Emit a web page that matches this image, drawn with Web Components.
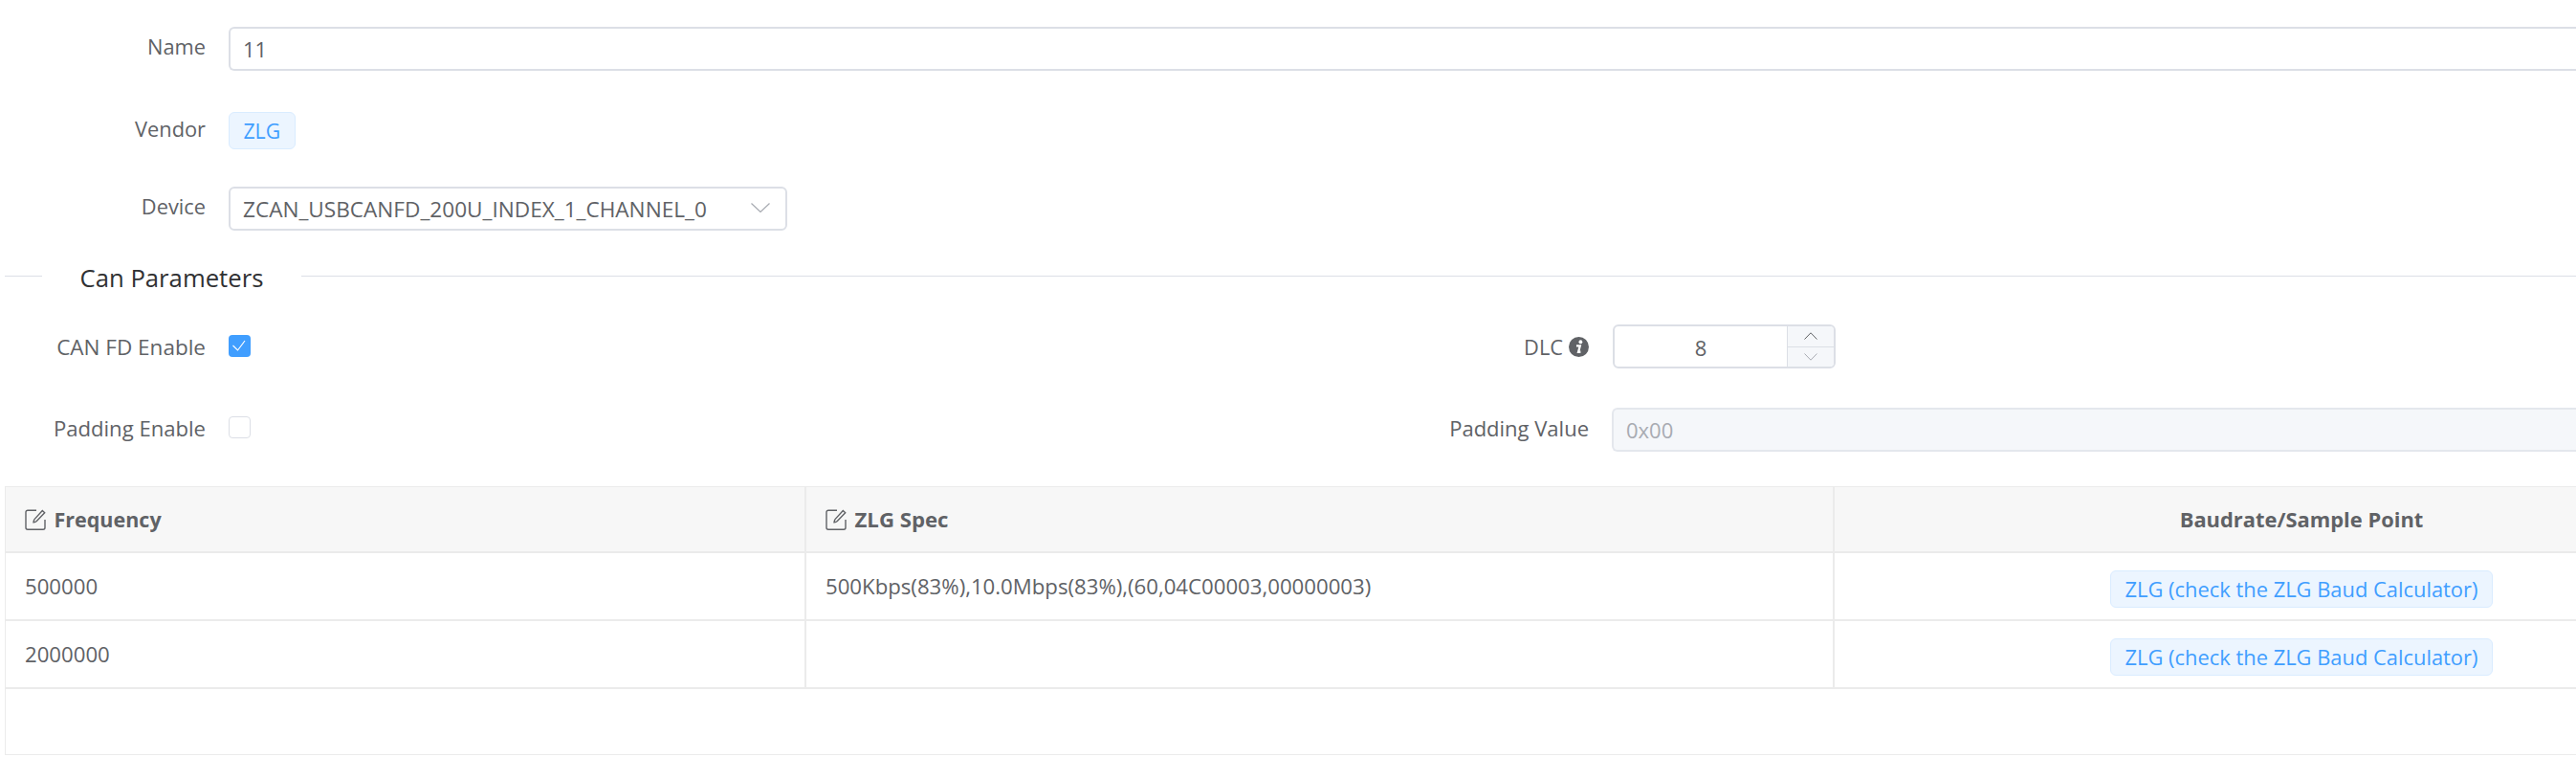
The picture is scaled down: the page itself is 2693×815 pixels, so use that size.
<!DOCTYPE html>
<html><head><meta charset="utf-8"><style>
html,body{margin:0;padding:0;background:#fff;overflow:hidden;height:815px}
body{font-family:"Open Sans","Noto Sans",sans-serif;font-size:21.8px;color:#606266}
</style></head><body>
<can-form>
  <form-row label="Name" style="--top:28px"><text-box value="11"></text-box></form-row>
  <form-row label="Vendor" style="--top:39.5px"><blue-tag style="font-size:21.2px">ZLG</blue-tag></form-row>
  <form-row label="Device" style="--top:35.5px"><select-box value="ZCAN_USBCANFD_200U_INDEX_1_CHANNEL_0"></select-box></form-row>
  <form-divider>Can Parameters</form-divider>
  <two-col style="--top:50px">
    <form-row label="CAN FD Enable" slot="a" style="--lb:0px;--lf:22.5px"><check-box checked></check-box></form-row>
    <form-row label="DLC" info slot="b" style="--lb:0px"><num-box value="8"></num-box></form-row>
  </two-col>
  <two-col style="--top:41px">
    <form-row label="Padding Enable" slot="a" style="--lb:4px;--lf:22.1px"><check-box></check-box></form-row>
    <form-row label="Padding Value" slot="b" style="--lb:4px;--lf:22px"><text-box value="0x00" disabled></text-box></form-row>
  </two-col>
  <freq-table></freq-table>
</can-form>
<script>
function def(name, html){
  customElements.define(name, class extends HTMLElement{
    connectedCallback(){
      if(this.shadowRoot) return;
      const r=this.attachShadow({mode:'open'});
      r.innerHTML=typeof html==='function'?html(this):html;
    }
  });
}
def('can-form',`<style>:host{display:block;width:2693px}</style><slot></slot>`);
def('form-row',el=>`<style>
:host{display:flex;align-items:center;margin-top:var(--top,0);height:46px}
.l{width:239px;flex:none;padding:0 24px var(--lb,5px) 0;box-sizing:border-box;display:flex;justify-content:flex-end;align-items:center;gap:6px;color:#606266;white-space:nowrap;font-size:var(--lf,21.8px)}
.c{flex:1;min-width:0;display:flex;align-items:center}
svg{width:21px;height:21px;display:block}
</style><div class="l"><span>${el.getAttribute('label')}</span>${el.hasAttribute('info')?`<svg viewBox="0 0 20 20"><circle cx="10" cy="10" r="10" fill="#606266"/><circle cx="11.8" cy="5" r="1.8" fill="#fff"/><path d="M7.600 9h3.600l-1.600 6h2.200" fill="none" stroke="#fff" stroke-width="2.200"/></svg>`:''}</div><div class="c"><slot></slot></div>`);
def('text-box',el=>{const d=el.hasAttribute('disabled');return `<style>
:host{display:block;flex:1;height:46px;box-sizing:border-box;border:2px solid ${d?'#e4e7ed':'#dcdfe6'};border-right:0;border-radius:6px 0 0 6px;background:${d?'#f5f7fa':'#fff'};color:${d?'#a8abb2':'#606266'};padding:0 13px;line-height:42px;font-size:22px}
</style>${el.getAttribute('value')}`});
def('blue-tag',`<style>:host{display:inline-block;height:39px;line-height:38px;box-sizing:border-box;padding:0 14.500px;background:#ecf5ff;border:1px solid #d9ecff;border-radius:6px;color:#409eff;font-size:21.9px;white-space:nowrap}</style><slot></slot>`);
def('select-box',el=>`<style>
:host{display:flex;align-items:center;width:584px;height:46px;box-sizing:border-box;border:2px solid #dcdfe6;border-radius:6px;padding:0 16px 0 13px;justify-content:space-between;color:#606266;font-size:22.6px}
svg{width:20px;height:10px;display:block;margin-top:-3px}
</style><span>${el.getAttribute('value')}</span><svg viewBox="0 0 20 10"><path d="M.5 .5l9.500 9 9.500-9" fill="none" stroke="#a8abb2" stroke-width="1.2"/></svg>`);
def('form-divider',`<style>
:host{display:block;position:relative;margin:47px 0 0 5px;height:1px;background:#dcdfe6}
span{position:absolute;left:38.500px;top:-14.500px;padding:0 40px;background:#fff;font-size:25.7px;line-height:34px;color:#303133;font-weight:500;white-space:nowrap}
</style><span><slot></slot></span>`);
def('two-col',`<style>
:host{display:grid;grid-template-columns:1446px 1fr;margin-top:var(--top,0)}
::slotted(form-row){margin:0}
</style><slot name="a"></slot><slot name="b"></slot>`);
def('check-box',el=>{const c=el.hasAttribute('checked');return `<style>
:host{display:block;width:23px;height:23px;box-sizing:border-box;margin-top:${c?'-1px':'-5px'};border:${c?'0':'1px solid #dcdfe6'};border-radius:4px;background:${c?'#409eff':'#fff'}}
svg{display:block;width:23px;height:23px}
</style>${c?'<svg viewBox="0 0 23 23"><path d="M4.500 11l5 5L17 6" fill="none" stroke="#fff" stroke-width="1.1"/></svg>':''}`});
def('num-box',el=>`<style>
:host{display:flex;width:233px;height:46px;margin-left:1px;box-sizing:border-box;border:2px solid #dcdfe6;border-radius:6px;overflow:hidden;font-size:22px}
.v{flex:1;text-align:center;line-height:44px;color:#606266}
.b{width:48px;border-left:1px solid #dcdfe6;background:#f5f7fa;display:flex;flex-direction:column}
.b div{flex:1;display:flex;align-items:center;justify-content:center}
.b div+div{border-top:1px solid #dcdfe6}
svg{width:14px;height:8px;display:block}
</style><div class="v">${el.getAttribute('value')}</div><div class="b"><div><svg viewBox="0 0 14 8"><path d="M.5 7.500L7 .8l6.500 6.700" fill="none" stroke="#606266" stroke-width="1"/></svg></div><div><svg viewBox="0 0 14 8"><path d="M.5 .5L7 7.200 13.500 .5" fill="none" stroke="#a8abb2" stroke-width="1"/></svg></div></div>`);
const pen=`<svg viewBox="0 0 22 22"><path d="M12 1.200H3A2 2 0 0 0 1 3.200v16A2 2 0 0 0 3 21.200h16a2 2 0 0 0 2-2V11" fill="none" stroke="currentColor" stroke-width="1.400"/><path d="M18.300 1.500l2.400 2.300-8.400 8.700c-.8.700-2.200 1.100-3.300 1.200.1-1.200.5-2.400 1.200-3.300z" fill="none" stroke="currentColor" stroke-width="1.400"/></svg>`;
def('freq-table',`<style>
:host{display:block;margin:36px 0 0 5px;width:2688px;box-sizing:border-box;border:solid #ebebeb;border-width:1px 0 1px 1px;color:#606266}
.r{display:grid;grid-template-columns:837px 1075px 1fr;height:71px;box-sizing:border-box;border-bottom:2px solid #ebebeb}
.r.h{height:69px;background:#f7f7f7;font-weight:700}
.c{display:flex;align-items:center;padding:0 20px;border-right:2px solid #ebebeb;box-sizing:border-box;min-width:0;white-space:nowrap;font-size:22.2px}
.h .c{font-size:21.9px}
.h .c.f{font-size:21.5px}
.h .c.z{font-size:22.2px}
.c.m{justify-content:center;border:0;padding:0 0 0 201px}
.c.t{padding-top:6px}
svg{width:22px;height:22px;margin-right:8.500px;flex:none}
.e{height:68px}
</style>
<div class="r h"><div class="c f">${pen}Frequency</div><div class="c z">${pen}ZLG Spec</div><div class="c m">Baudrate/Sample Point</div></div>
<div class="r"><div class="c">500000</div><div class="c">500Kbps(83%),10.0Mbps(83%),(60,04C00003,00000003)</div><div class="c m t"><blue-tag>ZLG (check the ZLG Baud Calculator)</blue-tag></div></div>
<div class="r"><div class="c">2000000</div><div class="c"></div><div class="c m t"><blue-tag>ZLG (check the ZLG Baud Calculator)</blue-tag></div></div>
<div class="e"></div>`);
</script>
</body></html>
